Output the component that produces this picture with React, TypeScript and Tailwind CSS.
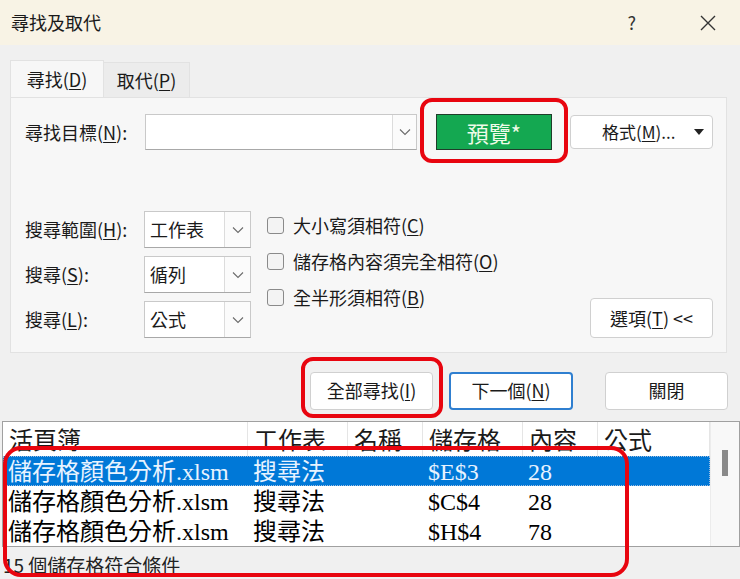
import React from 'react';

const Chevron = () => (
  <svg width="12" height="8" viewBox="0 0 12 8" fill="none">
    <polyline points="1,1.5 6,6.5 11,1.5" stroke="#6b6b6b" strokeWidth="1.1" />
  </svg>
);

const U = ({ c }: { c: string }) => <span className="underline underline-offset-[2px]">{c}</span>;

const SelectBox = ({ value }: { value: string }) => (
  <div className="flex h-[37px] w-[107px] border border-[#c9c9c9] border-b-[#a8a8a8] bg-white">
    <div className="flex flex-1 items-center pl-[5px] text-[18px] text-[#1a1a1a]">{value}</div>
    <div className="flex w-[26px] items-center justify-center border-l border-[#dcdcdc] bg-[#fbfbfb]">
      <Chevron />
    </div>
  </div>
);

const CheckRow = ({ children }: { children: React.ReactNode }) => (
  <div className="flex h-[36px] items-center gap-[9px]">
    <div className="h-[17px] w-[17px] rounded-[3px] border border-[#8a8a8a] bg-[#f3f3f3]" />
    <span className="text-[18px] text-[#1a1a1a]">{children}</span>
  </div>
);

const columns = [
  { title: '活頁簿', w: 'w-[245px]' },
  { title: '工作表', w: 'w-[100px]' },
  { title: '名稱', w: 'w-[75px]' },
  { title: '儲存格', w: 'w-[100px]' },
  { title: '內容', w: 'w-[75px]' },
  { title: '公式', w: 'flex-1' },
];

const rows = [
  ['儲存格顏色分析.xlsm', '搜尋法', '', '$E$3', '28', ''],
  ['儲存格顏色分析.xlsm', '搜尋法', '', '$C$4', '28', ''],
  ['儲存格顏色分析.xlsm', '搜尋法', '', '$H$4', '78', ''],
];

export default function App() {
  return (
    <div className="relative flex h-[579px] w-[740px] flex-col overflow-hidden bg-[#f0f0f0] font-['Noto_Sans_CJK_TC',sans-serif] text-[#1a1a1a]">
      {/* title bar */}
      <div className="flex h-[45px] shrink-0 items-center bg-[#f8f3e5] pl-[11px] pr-[24px]">
        <span className="text-[18px]">尋找及取代</span>
        <span className="ml-auto mr-[64px] text-[18px] text-[#333]">?</span>
        <svg width="16" height="16" viewBox="0 0 16 16">
          <path d="M1 1L15 15M15 1L1 15" stroke="#333" strokeWidth="1.4" />
        </svg>
      </div>

      <div className="flex flex-col pl-[10px] pr-[13px] pt-[15px]">
        {/* tabs */}
        <div className="flex h-[37px] items-end">
          <div className="flex h-[37px] w-[94px] items-center justify-center border border-b-0 border-[#e2e2e2] bg-[#f7f7f7] text-[18px]">
            尋找(<U c="D" />)
          </div>
          <div className="flex h-[35px] w-[86px] items-center justify-center border-r border-t border-[#e2e2e2] bg-[#ececec] text-[18px]">
            取代(<U c="P" />)
          </div>
        </div>

        {/* panel */}
        <div className="flex h-[256px] flex-col border border-[#e2e2e2] bg-[#f7f7f7] pl-[14px] pr-[13px] pt-[16px]">
          <div className="flex h-[36px] items-center">
            <div className="w-[120px] text-[18px]">
              尋找目標(<U c="N" />):
            </div>
            <div className="flex h-[36px] w-[272px] border border-[#c9c9c9] border-b-[#a8a8a8] bg-white">
              <div className="flex-1" />
              <div className="flex w-[24px] items-center justify-center border-l border-[#dcdcdc] bg-[#fbfbfb]">
                <Chevron />
              </div>
            </div>
            <div className="ml-[19px] flex h-[36px] w-[116px] items-center justify-center border border-[#1f3d2a] bg-[#14a851] text-[22px] text-[#eefbe8]">
              預覽*
            </div>
            <div className="ml-[18px] flex h-[34px] w-[143px] items-center rounded-[4px] border border-[#d0d0d0] bg-white pl-[31px] pr-[8px] text-[17px]">
              格式(<U c="M" />)...
              <svg className="ml-auto" width="10" height="6" viewBox="0 0 10 6">
                <path d="M0 0H10L5 6Z" fill="#222" />
              </svg>
            </div>
          </div>

          <div className="mt-[57px] flex">
            <div className="flex flex-col gap-[8px] pt-[4px]">
              {[
                ['搜尋範圍', 'H', '工作表'],
                ['搜尋', 'S', '循列'],
                ['搜尋', 'L', '公式'],
              ].map(([label, key, value], i) => (
                <div key={i} className="flex items-center">
                  <div className="w-[119px] text-[18px]">
                    {label}(<U c={key} />):
                  </div>
                  <SelectBox value={value} />
                </div>
              ))}
            </div>
            <div className="ml-[16px] flex flex-col">
              <CheckRow>
                大小寫須相符(<U c="C" />)
              </CheckRow>
              <CheckRow>
                儲存格內容須完全相符(<U c="O" />)
              </CheckRow>
              <CheckRow>
                全半形須相符(<U c="B" />)
              </CheckRow>
            </div>
            <div className="ml-auto flex items-end">
              <div className="flex h-[40px] w-[123px] items-center justify-center rounded-[4px] border border-[#d0d0d0] bg-white text-[18px]">
                選項(<U c="T" />)&nbsp;&lt;&lt;
              </div>
            </div>
          </div>
        </div>
      </div>

      {/* action buttons */}
      <div className="mt-[19px] flex h-[40px] justify-end pr-[12px] text-[18px]">
        <div className="flex w-[123px] items-center justify-center rounded-[4px] border border-[#d0d0d0] bg-white">
          全部尋找(<U c="I" />)
        </div>
        <div className="ml-[16px] flex w-[124px] items-center justify-center rounded-[4px] border-2 border-[#2f7fd0] bg-white">
          下一個(<U c="N" />)
        </div>
        <div className="ml-[32px] flex w-[123px] items-center justify-center rounded-[4px] border border-[#d0d0d0] bg-white">
          關閉
        </div>
      </div>

      {/* results list */}
      <div className="ml-[2px] mt-[11px] flex h-[126px] border border-[#a0a0a0] bg-white font-['Liberation_Serif','Noto_Sans_CJK_TC',serif] text-[24px]">
        <div className="flex flex-1 flex-col">
          <div className="flex h-[34px]">
            {columns.map((c) => (
              <div key={c.title} className={`${c.w} flex items-center border-r border-[#e5e5e5] pl-[6px] pt-[5px] leading-none`}>
                {c.title}
              </div>
            ))}
          </div>
          {rows.map((r, i) => (
            <div
              key={i}
              className={`flex h-[30px] ${i === 0 ? 'border border-dotted border-[#9fbde0] bg-[#0078d7] text-[#e8f3ff]' : 'border border-transparent text-black'}`}
            >
              {r.map((cell, j) => (
                <div key={j} className={`${columns[j].w} flex items-center pl-[4px] pt-[3px] leading-none`}>
                  {cell}
                </div>
              ))}
            </div>
          ))}
        </div>
        <div className="flex w-[29px] justify-center border-l border-[#ececec] bg-[#f8f8f8] pt-[28px]">
          <div className="h-[26px] w-[6px] bg-[#8a8a8a]" />
        </div>
      </div>

      {/* status bar */}
      <div className="flex flex-1 items-start pl-[3px] pt-[4px] text-[19px] text-[#222]">15 個儲存格符合條件</div>

      {/* highlight boxes */}
      <div className="pointer-events-none absolute left-[420px] top-[98px] h-[65px] w-[148px] rounded-[12px] border-4 border-[#e8050f]" />
      <div className="pointer-events-none absolute left-[301px] top-[357px] h-[61px] w-[142px] rounded-[12px] border-4 border-[#e8050f]" />
      <div className="pointer-events-none absolute left-[3px] top-[446px] h-[131px] w-[626px] rounded-[18px] border-4 border-[#e8050f]" />
    </div>
  );
}
